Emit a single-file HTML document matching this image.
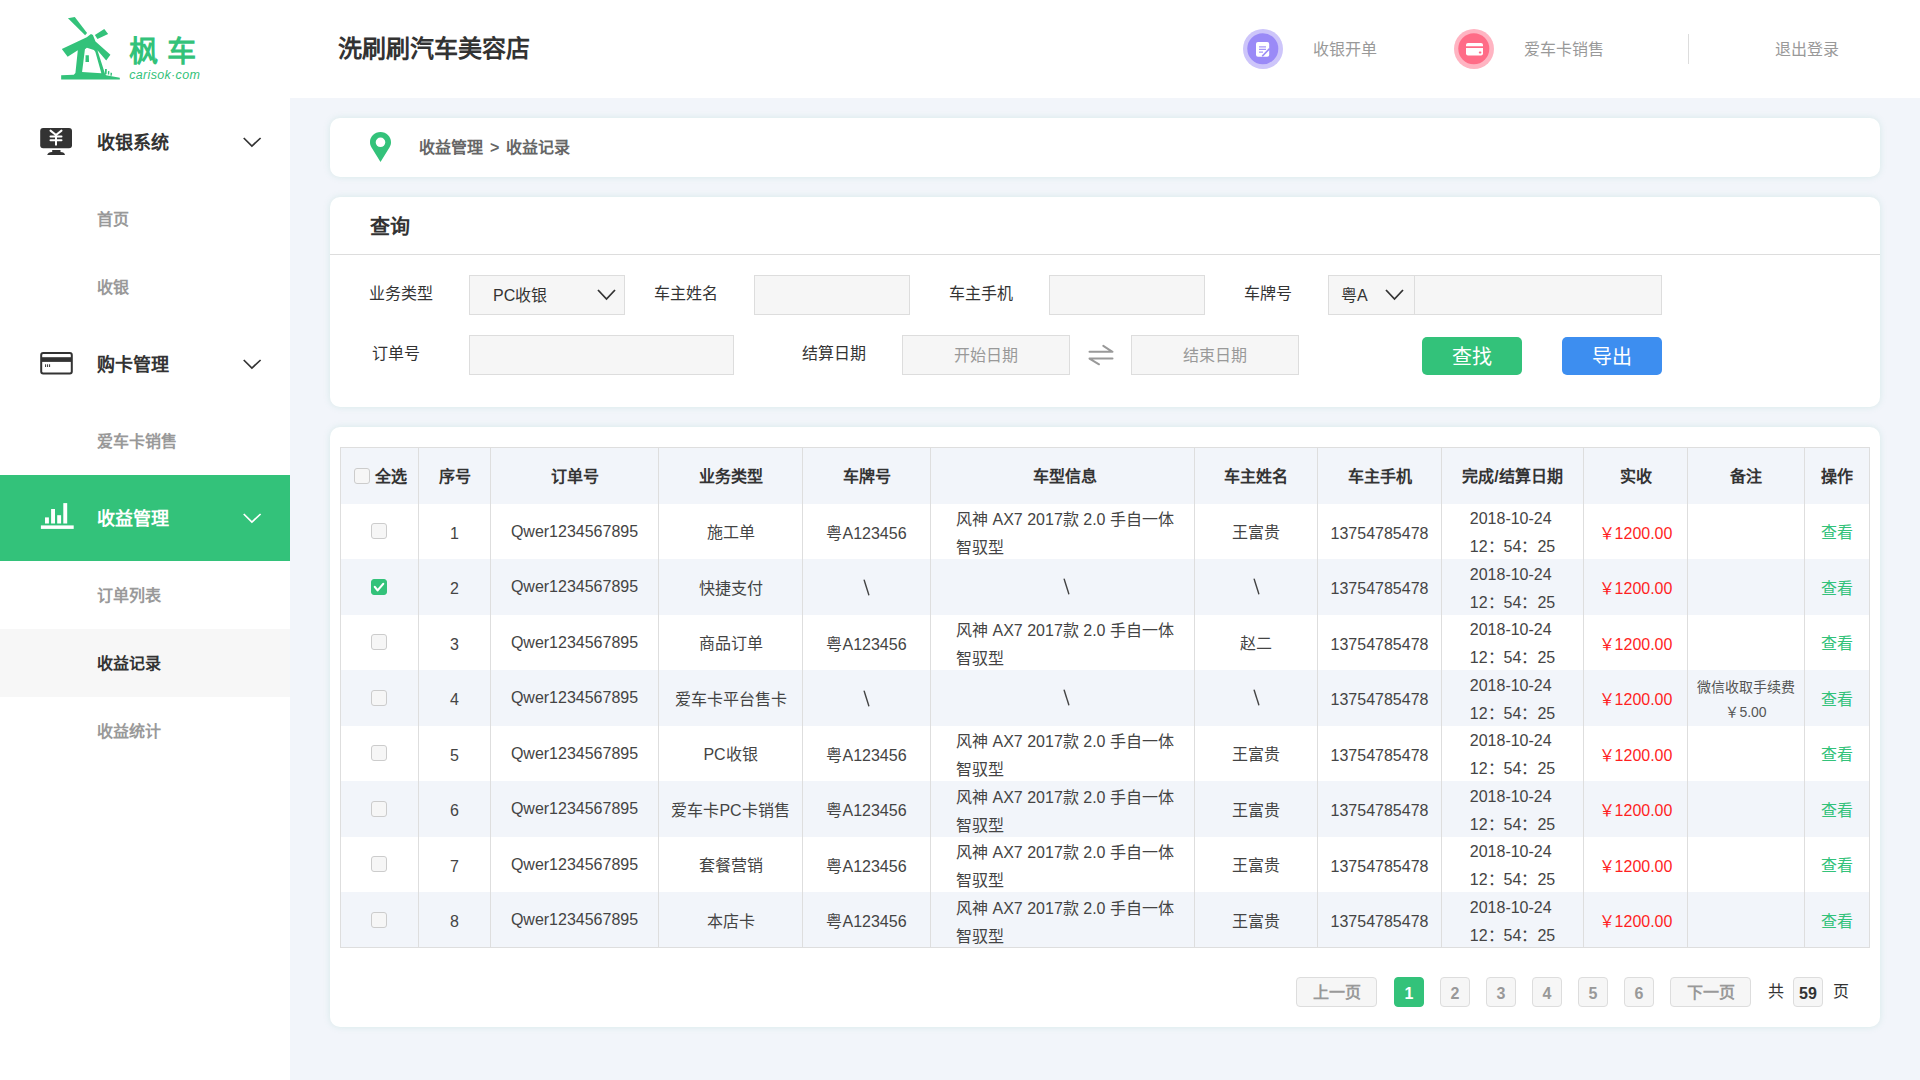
<!DOCTYPE html>
<html lang="zh-CN"><head><meta charset="utf-8">
<style>
*{margin:0;padding:0;box-sizing:border-box}
html,body{width:1920px;height:1080px;overflow:hidden;background:#f2f5fa;font-family:"Liberation Sans",sans-serif;color:#333}
.abs{position:absolute}
.t{position:absolute;white-space:nowrap;line-height:1}
#hdr{position:absolute;left:0;top:0;width:1920px;height:98px;background:#fff}
#side{position:absolute;left:0;top:98px;width:290px;height:982px;background:#fff}
.card{position:absolute;background:#fff;border-radius:10px;box-shadow:0 0 6px rgba(130,200,185,.25)}
.grp{position:absolute;left:0;width:290px;height:86px}
.grp .lbl{position:absolute;left:97px;top:34px;font-size:18px;font-weight:bold;color:#333;line-height:20px}
.chev{position:absolute;left:243px;top:37px}
.sub{position:absolute;left:0;width:290px;height:68px}
.sub .lbl{position:absolute;left:97px;top:25px;font-size:16px;color:#999;line-height:20px;font-weight:bold}
.inp{position:absolute;background:#f6f6f6;border:1px solid #ddd}
.flbl{position:absolute;font-size:16px;color:#333;line-height:20px;margin-top:1px}
.c{position:absolute;display:flex;align-items:center;justify-content:center;font-size:16px;color:#444;text-align:center;white-space:nowrap}
.hd{font-weight:bold;color:#333}
.car{text-align:left;line-height:28px}
.dt{text-align:left;line-height:28px}
.rm{font-size:14px;line-height:25px;color:#555}
.cb{display:inline-block;width:16px;height:16px;border:1px solid #ccc;border-radius:3px;background:#f6f6f6;vertical-align:middle}
.cb.on{background:#33c27a;border-color:#33c27a;position:relative}
.cb.on svg{position:absolute;left:-1px;top:-1px}
.pb{position:absolute;top:977px;height:30px;border:1px solid #ddd;border-radius:4px;background:#f6f6f6;font-size:16px;display:flex;align-items:center;justify-content:center}
</style></head><body>
<div id="hdr">
  <!-- logo -->
  <svg class="abs" style="left:55px;top:12px" width="70" height="70" viewBox="55 12 70 70">
    <g fill="#33c27a">
      <polygon points="67.96,18.16 74.77,17.06 87.08,33.06 85.14,35.33"/>
      <polygon points="94.86,35.01 104.26,28.98 108.15,34.04 97.45,38.90"/>
      <path fill-rule="evenodd" d="M61.81,48.94 86.76,37.28 90.97,33.91 92.92,35.01 95.51,41.49 110.42,54.78 106.20,60.61 97.45,50.24 104.91,73.57 106.20,75.19 119.81,77.79 119.81,79.41 61.16,79.41 61.16,75.19 73.80,74.87 75.42,72.93 77.81,50.24 67.64,56.72 Z M84.94,49.27 86.89,47.84 93.89,50.11 95.31,51.67 101.34,73.25 82.09,71.95 Z"/>
      <polygon points="85.59,55.30 88.83,55.30 89.03,61.91 85.46,61.91"/>
      <polygon points="105.04,69.04 106.85,69.04 106.53,74.22 104.91,74.22"/>
      <polygon points="108.02,70.98 109.44,71.31 109.12,74.55 107.82,74.55"/>
      <polygon points="110.61,72.60 112.04,72.93 111.71,75.84 110.42,75.84"/>
    </g>
  </svg>
  <svg class="abs" style="left:50px;top:10px" width="160" height="80" viewBox="0 0 1920 960">
    <text x="945" y="625" font-size="350" letter-spacing="110" fill="#33c27a" font-weight="bold" font-family="Liberation Sans">枫车</text>
    <text x="950" y="832" font-size="150" letter-spacing="4" fill="#33c27a" font-style="italic" font-family="Liberation Sans">carisok·com</text>
  </svg>
  <div class="t" style="left:338px;top:37px;font-size:24px;font-weight:bold;color:#333">洗刷刷汽车美容店</div>
  <!-- right -->
  <svg class="abs" style="left:1243px;top:29px" width="40" height="40" viewBox="1243 29 40 40">
    <circle cx="1263" cy="49" r="20" fill="#cdc5fa"/>
    <circle cx="1262.8" cy="48.8" r="15.5" fill="#9a8af7"/>
    <rect x="1256" y="42" width="13.2" height="14.7" rx="2" fill="#fff"/>
    <path d="M1259 46.8 H1266 M1259 49.4 H1266 M1259 52.1 H1263" stroke="#a899f7" stroke-width="1.3"/>
    <path d="M1262.2 56.2 L1269.6 48.6" stroke="#9a8af7" stroke-width="1.6"/>
  </svg>
  <div class="t" style="left:1313px;top:42px;font-size:16px;color:#999">收银开单</div>
  <svg class="abs" style="left:1454px;top:29px" width="40" height="40" viewBox="1454 29 40 40">
    <circle cx="1474" cy="49" r="20" fill="#ffb4c2"/>
    <circle cx="1473.8" cy="48.8" r="15.5" fill="#ff6c87"/>
    <path d="M1468 43 H1481 Q1483 43 1483 45 V46.3 H1466 V45 Q1466 43 1468 43 Z" fill="#fff"/>
    <path d="M1466 48.1 H1483 V53.4 Q1483 55.4 1481 55.4 H1468 Q1466 55.4 1466 53.4 Z" fill="#fff"/>
    <rect x="1478.8" y="51.6" width="2.6" height="1.8" rx=".9" fill="#ff6c87"/>
  </svg>
  <div class="t" style="left:1524px;top:42px;font-size:16px;color:#999">爱车卡销售</div>
  <div class="abs" style="left:1688px;top:34px;width:1px;height:30px;background:#ddd"></div>
  <div class="t" style="left:1775px;top:42px;font-size:16px;color:#999">退出登录</div>
</div>

<div id="side">
  <!-- group 1 -->
  <div class="grp" style="top:1px">
    <svg class="abs" style="left:40px;top:29px" width="33" height="27" viewBox="40 128 33 27">
      <rect x="40.2" y="128" width="31.8" height="20.2" rx="3" fill="#333"/>
      <path d="M50.5 130.6 L56 135 L61.5 130.6 M50.5 136.6 H61.5 M50.5 140.2 H61.5 M56 135 V144.8" stroke="#fff" stroke-width="2" fill="none" stroke-linecap="round"/>
      <rect x="52.2" y="150" width="8.3" height="3" fill="#333"/>
      <path d="M47.2 155 Q48 152 52 152 H60.5 Q64.5 152 65 155 Z" fill="#333"/>
    </svg>
    <div class="lbl">收银系统</div>
    <svg class="chev" width="19" height="12" viewBox="0 0 19 12"><path d="M0.75 2 L8.9 10.1 L17.6 2" stroke="#333" stroke-width="1.7" fill="none"/></svg>
  </div>
  <div class="sub" style="top:87px"><div class="lbl">首页</div></div>
  <div class="sub" style="top:155px"><div class="lbl">收银</div></div>
  <!-- group 2 -->
  <div class="grp" style="top:223px">
    <svg class="abs" style="left:40px;top:30px" width="34" height="25" viewBox="40 351 34 25">
      <rect x="41.2" y="353" width="30.6" height="20.6" rx="2" fill="none" stroke="#333" stroke-width="2"/>
      <rect x="41" y="357.2" width="31" height="4.7" fill="#333"/>
      <path d="M45.6 364.3 V367 M47.6 364.3 V367 M49.6 364.3 V367" stroke="#333" stroke-width="1"/>
    </svg>
    <div class="lbl">购卡管理</div>
    <svg class="chev" width="19" height="12" viewBox="0 0 19 12"><path d="M0.75 2 L8.9 10.1 L17.6 2" stroke="#333" stroke-width="1.7" fill="none"/></svg>
  </div>
  <div class="sub" style="top:309px"><div class="lbl">爱车卡销售</div></div>
  <!-- group 3 active -->
  <div class="grp" style="top:377px;background:#33c27a">
    <svg class="abs" style="left:40px;top:27px" width="35" height="28" viewBox="40 502 35 28">
      <rect x="40.9" y="525.4" width="32.8" height="3.5" fill="#fff"/>
      <rect x="45" y="517.4" width="3.9" height="6.1" fill="#fff"/>
      <rect x="51.1" y="509" width="3.9" height="14.5" fill="#fff"/>
      <rect x="57.2" y="515.2" width="3.9" height="8.3" fill="#fff"/>
      <rect x="63.3" y="503.1" width="3.9" height="20.4" fill="#fff"/>
    </svg>
    <div class="lbl" style="color:#fff">收益管理</div>
    <svg class="chev" width="19" height="12" viewBox="0 0 19 12"><path d="M0.75 2 L8.9 10.1 L17.6 2" stroke="#fff" stroke-width="1.7" fill="none"/></svg>
  </div>
  <div class="sub" style="top:463px"><div class="lbl">订单列表</div></div>
  <div class="sub" style="top:531px;background:#f7f7f7"><div class="lbl" style="color:#333">收益记录</div></div>
  <div class="sub" style="top:599px"><div class="lbl">收益统计</div></div>
</div>

<!-- breadcrumb -->
<div class="card" style="left:330px;top:118px;width:1550px;height:59px"></div>
<svg class="abs" style="left:369px;top:131px" width="23" height="32" viewBox="0 0 23 32">
  <path d="M11.5 1 C5.6 1 1 5.5 1 11.2 C1 13.2 1.6 14.6 2.4 16.2 L11.5 31 L20.6 16.2 C21.4 14.6 22 13.2 22 11.2 C22 5.5 17.4 1 11.5 1 Z M11.5 6.5 A4.8 4.8 0 1 1 11.5 16.1 A4.8 4.8 0 1 1 11.5 6.5 Z" fill="#33c27a" fill-rule="evenodd"/>
</svg>
<div class="t" style="left:419px;top:140px;font-size:16px;font-weight:bold;color:#666">收益管理<span style="display:inline-block;width:7px"></span>&gt;<span style="display:inline-block;width:7px"></span>收益记录</div>
<!-- query -->
<div class="card" style="left:330px;top:197px;width:1550px;height:210px"></div>
<div class="t" style="left:370px;top:217px;font-size:20px;font-weight:bold;color:#333">查询</div>
<div class="abs" style="left:330px;top:254px;width:1550px;height:1px;background:#ddd"></div>
<div class="flbl" style="left:369px;top:283px">业务类型</div>
<div class="inp" style="left:469px;top:275px;width:156px;height:40px"></div>
<div class="t" style="left:493px;top:288px;font-size:16px;color:#333">PC收银</div>
<svg class="abs" style="left:597px;top:289px" width="19" height="12" viewBox="0 0 19 12"><path d="M1 1 L9.5 10 L18 1" stroke="#333" stroke-width="1.8" fill="none"/></svg>
<div class="flbl" style="left:654px;top:283px">车主姓名</div>
<div class="inp" style="left:754px;top:275px;width:156px;height:40px"></div>
<div class="flbl" style="left:949px;top:283px">车主手机</div>
<div class="inp" style="left:1049px;top:275px;width:156px;height:40px"></div>
<div class="flbl" style="left:1244px;top:283px">车牌号</div>
<div class="inp" style="left:1328px;top:275px;width:334px;height:40px"></div>
<div class="abs" style="left:1414px;top:276px;width:1px;height:38px;background:#ddd"></div>
<div class="t" style="left:1341px;top:288px;font-size:16px;color:#333">粤A</div>
<svg class="abs" style="left:1385px;top:289px" width="19" height="12" viewBox="0 0 19 12"><path d="M1 1 L9.5 10 L18 1" stroke="#333" stroke-width="1.8" fill="none"/></svg>

<div class="flbl" style="left:372px;top:343px">订单号</div>
<div class="inp" style="left:469px;top:335px;width:265px;height:40px"></div>
<div class="flbl" style="left:802px;top:343px">结算日期</div>
<div class="inp" style="left:902px;top:335px;width:168px;height:40px"></div>
<div class="t" style="left:954px;top:348px;font-size:16px;color:#999">开始日期</div>
<svg class="abs" style="left:1087px;top:343px" width="28" height="24" viewBox="1087 343 28 24">
  <path d="M1089.5 351.8 H1112.5 L1103.3 345.8 M1112.5 358.6 H1089.5 L1099 364.3" stroke="#999" stroke-width="2" fill="none" stroke-linejoin="round" stroke-linecap="round"/>
</svg>
<div class="inp" style="left:1131px;top:335px;width:168px;height:40px"></div>
<div class="t" style="left:1183px;top:348px;font-size:16px;color:#999">结束日期</div>
<div class="abs" style="left:1422px;top:337px;width:100px;height:38px;border-radius:5px;background:#33c27a"></div>
<div class="t" style="left:1452px;top:347px;font-size:20px;color:#fff">查找</div>
<div class="abs" style="left:1562px;top:337px;width:100px;height:38px;border-radius:5px;background:#3d8ef0"></div>
<div class="t" style="left:1592px;top:347px;font-size:20px;color:#fff">导出</div>
<!-- tablecard -->
<div class="card" style="left:330px;top:427px;width:1550px;height:600px"></div>
<!-- table -->
<div class="abs" style="left:340px;top:447px;width:1530px;height:501px;background:#fff"></div>
<div class="abs" style="left:341px;top:448px;width:1528px;height:55.5px;background:#f2f5fa"></div>
<div class="abs" style="left:341px;top:559.0px;width:1528px;height:55.5px;background:#f2f5fa"></div>
<div class="abs" style="left:341px;top:670.0px;width:1528px;height:55.5px;background:#f2f5fa"></div>
<div class="abs" style="left:341px;top:781.0px;width:1528px;height:55.5px;background:#f2f5fa"></div>
<div class="abs" style="left:341px;top:892.0px;width:1528px;height:55.5px;background:#f2f5fa"></div>
<div class="abs" style="left:418px;top:448px;width:1px;height:499px;background:#dedede"></div>
<div class="abs" style="left:490px;top:448px;width:1px;height:499px;background:#dedede"></div>
<div class="abs" style="left:658px;top:448px;width:1px;height:499px;background:#dedede"></div>
<div class="abs" style="left:802px;top:448px;width:1px;height:499px;background:#dedede"></div>
<div class="abs" style="left:930px;top:448px;width:1px;height:499px;background:#dedede"></div>
<div class="abs" style="left:1194px;top:448px;width:1px;height:499px;background:#dedede"></div>
<div class="abs" style="left:1317px;top:448px;width:1px;height:499px;background:#dedede"></div>
<div class="abs" style="left:1441px;top:448px;width:1px;height:499px;background:#dedede"></div>
<div class="abs" style="left:1583px;top:448px;width:1px;height:499px;background:#dedede"></div>
<div class="abs" style="left:1687px;top:448px;width:1px;height:499px;background:#dedede"></div>
<div class="abs" style="left:1804px;top:448px;width:1px;height:499px;background:#dedede"></div>
<div class="abs" style="left:340px;top:447px;width:1530px;height:501px;border:1px solid #dedede"></div>
<div class="c hd" style="left:341px;top:448px;width:77px;height:55.5px;padding-bottom:2px;"><span class="cb" style="margin-right:6px;position:relative;left:1px;top:1px"></span>全选</div>
<div class="c hd" style="left:419px;top:448px;width:71px;height:55.5px;padding-bottom:2px;">序号</div>
<div class="c hd" style="left:491px;top:448px;width:167px;height:55.5px;padding-bottom:2px;">订单号</div>
<div class="c hd" style="left:659px;top:448px;width:143px;height:55.5px;padding-bottom:2px;">业务类型</div>
<div class="c hd" style="left:803px;top:448px;width:127px;height:55.5px;padding-bottom:2px;">车牌号</div>
<div class="c hd" style="left:931px;top:448px;width:263px;height:55.5px;padding-bottom:2px;padding-left:5.0px;">车型信息</div>
<div class="c hd" style="left:1195px;top:448px;width:122px;height:55.5px;padding-bottom:2px;">车主姓名</div>
<div class="c hd" style="left:1318px;top:448px;width:123px;height:55.5px;padding-bottom:2px;">车主手机</div>
<div class="c hd" style="left:1442px;top:448px;width:141px;height:55.5px;padding-bottom:2px;">完成/结算日期</div>
<div class="c hd" style="left:1584px;top:448px;width:103px;height:55.5px;padding-bottom:2px;">实收</div>
<div class="c hd" style="left:1688px;top:448px;width:116px;height:55.5px;padding-bottom:2px;">备注</div>
<div class="c hd" style="left:1805px;top:448px;width:64px;height:55.5px;padding-bottom:2px;">操作</div>
<div class="c" style="left:341px;top:503.5px;width:77px;height:55.5px;"><span style="margin-left:-2px;display:flex"><span class="cb"></span></span></div>
<div class="c" style="left:419px;top:503.5px;width:71px;height:55.5px;padding-top:5.0px;">1</div>
<div class="c" style="left:491px;top:503.5px;width:167px;height:55.5px;padding-top:1.0px;">Qwer1234567895</div>
<div class="c" style="left:659px;top:503.5px;width:143px;height:55.5px;">施工单</div>
<div class="c" style="left:803px;top:503.5px;width:127px;height:55.5px;padding-top:1.0px;">粤A123456</div>
<div class="c" style="left:931px;top:503.5px;width:263px;height:55.5px;padding-top:6px;padding-left:5.0px;"><div class="car">风神 AX7 2017款 2.0 手自一体<br>智驭型</div></div>
<div class="c" style="left:1195px;top:503.5px;width:122px;height:55.5px;">王富贵</div>
<div class="c" style="left:1318px;top:503.5px;width:123px;height:55.5px;padding-top:5.0px;">13754785478</div>
<div class="c" style="left:1442px;top:503.5px;width:141px;height:55.5px;padding-top:4px;"><div class="dt">2018-10-24<br>12：54：25</div></div>
<div class="c" style="left:1584px;top:503.5px;width:103px;height:55.5px;padding-top:1.0px;color:#ff1f1f">￥1200.00</div>
<div class="c" style="left:1805px;top:503.5px;width:64px;height:55.5px;color:#33c27a">查看</div>
<div class="c" style="left:341px;top:559.0px;width:77px;height:55.5px;"><span style="margin-left:-2px;display:flex"><span class="cb on"><svg width="16" height="16" viewBox="0 0 16 16"><path d="M3.8 7.9 L6.6 11.4 L12.2 4.9" stroke="#fff" stroke-width="2.2" fill="none" stroke-linecap="round" stroke-linejoin="round"/></svg></span></span></div>
<div class="c" style="left:419px;top:559.0px;width:71px;height:55.5px;padding-top:5.0px;">2</div>
<div class="c" style="left:491px;top:559.0px;width:167px;height:55.5px;padding-top:1.0px;">Qwer1234567895</div>
<div class="c" style="left:659px;top:559.0px;width:143px;height:55.5px;">快捷支付</div>
<div class="c" style="left:803px;top:559.0px;width:127px;height:55.5px;padding-top:1.0px;"><svg width="7" height="17" viewBox="0 0 7 17" style="display:block"><path d="M1.2 1.2 L5.8 15.8" stroke="#444" stroke-width="1.4" stroke-linecap="round"/></svg></div>
<div class="c" style="left:931px;top:559.0px;width:263px;height:55.5px;padding-left:7px"><svg width="7" height="17" viewBox="0 0 7 17" style="display:block"><path d="M1.2 1.2 L5.8 15.8" stroke="#444" stroke-width="1.4" stroke-linecap="round"/></svg></div>
<div class="c" style="left:1195px;top:559.0px;width:122px;height:55.5px;"><svg width="7" height="17" viewBox="0 0 7 17" style="display:block"><path d="M1.2 1.2 L5.8 15.8" stroke="#444" stroke-width="1.4" stroke-linecap="round"/></svg></div>
<div class="c" style="left:1318px;top:559.0px;width:123px;height:55.5px;padding-top:5.0px;">13754785478</div>
<div class="c" style="left:1442px;top:559.0px;width:141px;height:55.5px;padding-top:4px;"><div class="dt">2018-10-24<br>12：54：25</div></div>
<div class="c" style="left:1584px;top:559.0px;width:103px;height:55.5px;padding-top:1.0px;color:#ff1f1f">￥1200.00</div>
<div class="c" style="left:1805px;top:559.0px;width:64px;height:55.5px;color:#33c27a">查看</div>
<div class="c" style="left:341px;top:614.5px;width:77px;height:55.5px;"><span style="margin-left:-2px;display:flex"><span class="cb"></span></span></div>
<div class="c" style="left:419px;top:614.5px;width:71px;height:55.5px;padding-top:5.0px;">3</div>
<div class="c" style="left:491px;top:614.5px;width:167px;height:55.5px;padding-top:1.0px;">Qwer1234567895</div>
<div class="c" style="left:659px;top:614.5px;width:143px;height:55.5px;">商品订单</div>
<div class="c" style="left:803px;top:614.5px;width:127px;height:55.5px;padding-top:1.0px;">粤A123456</div>
<div class="c" style="left:931px;top:614.5px;width:263px;height:55.5px;padding-top:6px;padding-left:5.0px;"><div class="car">风神 AX7 2017款 2.0 手自一体<br>智驭型</div></div>
<div class="c" style="left:1195px;top:614.5px;width:122px;height:55.5px;">赵二</div>
<div class="c" style="left:1318px;top:614.5px;width:123px;height:55.5px;padding-top:5.0px;">13754785478</div>
<div class="c" style="left:1442px;top:614.5px;width:141px;height:55.5px;padding-top:4px;"><div class="dt">2018-10-24<br>12：54：25</div></div>
<div class="c" style="left:1584px;top:614.5px;width:103px;height:55.5px;padding-top:1.0px;color:#ff1f1f">￥1200.00</div>
<div class="c" style="left:1805px;top:614.5px;width:64px;height:55.5px;color:#33c27a">查看</div>
<div class="c" style="left:341px;top:670.0px;width:77px;height:55.5px;"><span style="margin-left:-2px;display:flex"><span class="cb"></span></span></div>
<div class="c" style="left:419px;top:670.0px;width:71px;height:55.5px;padding-top:5.0px;">4</div>
<div class="c" style="left:491px;top:670.0px;width:167px;height:55.5px;padding-top:1.0px;">Qwer1234567895</div>
<div class="c" style="left:659px;top:670.0px;width:143px;height:55.5px;">爱车卡平台售卡</div>
<div class="c" style="left:803px;top:670.0px;width:127px;height:55.5px;padding-top:1.0px;"><svg width="7" height="17" viewBox="0 0 7 17" style="display:block"><path d="M1.2 1.2 L5.8 15.8" stroke="#444" stroke-width="1.4" stroke-linecap="round"/></svg></div>
<div class="c" style="left:931px;top:670.0px;width:263px;height:55.5px;padding-left:7px"><svg width="7" height="17" viewBox="0 0 7 17" style="display:block"><path d="M1.2 1.2 L5.8 15.8" stroke="#444" stroke-width="1.4" stroke-linecap="round"/></svg></div>
<div class="c" style="left:1195px;top:670.0px;width:122px;height:55.5px;"><svg width="7" height="17" viewBox="0 0 7 17" style="display:block"><path d="M1.2 1.2 L5.8 15.8" stroke="#444" stroke-width="1.4" stroke-linecap="round"/></svg></div>
<div class="c" style="left:1318px;top:670.0px;width:123px;height:55.5px;padding-top:5.0px;">13754785478</div>
<div class="c" style="left:1442px;top:670.0px;width:141px;height:55.5px;padding-top:4px;"><div class="dt">2018-10-24<br>12：54：25</div></div>
<div class="c" style="left:1584px;top:670.0px;width:103px;height:55.5px;padding-top:1.0px;color:#ff1f1f">￥1200.00</div>
<div class="c" style="left:1688px;top:670.0px;width:116px;height:55.5px;padding-top:5.0px;"><div class="rm">微信收取手续费<br>￥5.00</div></div>
<div class="c" style="left:1805px;top:670.0px;width:64px;height:55.5px;color:#33c27a">查看</div>
<div class="c" style="left:341px;top:725.5px;width:77px;height:55.5px;"><span style="margin-left:-2px;display:flex"><span class="cb"></span></span></div>
<div class="c" style="left:419px;top:725.5px;width:71px;height:55.5px;padding-top:5.0px;">5</div>
<div class="c" style="left:491px;top:725.5px;width:167px;height:55.5px;padding-top:1.0px;">Qwer1234567895</div>
<div class="c" style="left:659px;top:725.5px;width:143px;height:55.5px;">PC收银</div>
<div class="c" style="left:803px;top:725.5px;width:127px;height:55.5px;padding-top:1.0px;">粤A123456</div>
<div class="c" style="left:931px;top:725.5px;width:263px;height:55.5px;padding-top:6px;padding-left:5.0px;"><div class="car">风神 AX7 2017款 2.0 手自一体<br>智驭型</div></div>
<div class="c" style="left:1195px;top:725.5px;width:122px;height:55.5px;">王富贵</div>
<div class="c" style="left:1318px;top:725.5px;width:123px;height:55.5px;padding-top:5.0px;">13754785478</div>
<div class="c" style="left:1442px;top:725.5px;width:141px;height:55.5px;padding-top:4px;"><div class="dt">2018-10-24<br>12：54：25</div></div>
<div class="c" style="left:1584px;top:725.5px;width:103px;height:55.5px;padding-top:1.0px;color:#ff1f1f">￥1200.00</div>
<div class="c" style="left:1805px;top:725.5px;width:64px;height:55.5px;color:#33c27a">查看</div>
<div class="c" style="left:341px;top:781.0px;width:77px;height:55.5px;"><span style="margin-left:-2px;display:flex"><span class="cb"></span></span></div>
<div class="c" style="left:419px;top:781.0px;width:71px;height:55.5px;padding-top:5.0px;">6</div>
<div class="c" style="left:491px;top:781.0px;width:167px;height:55.5px;padding-top:1.0px;">Qwer1234567895</div>
<div class="c" style="left:659px;top:781.0px;width:143px;height:55.5px;">爱车卡PC卡销售</div>
<div class="c" style="left:803px;top:781.0px;width:127px;height:55.5px;padding-top:1.0px;">粤A123456</div>
<div class="c" style="left:931px;top:781.0px;width:263px;height:55.5px;padding-top:6px;padding-left:5.0px;"><div class="car">风神 AX7 2017款 2.0 手自一体<br>智驭型</div></div>
<div class="c" style="left:1195px;top:781.0px;width:122px;height:55.5px;">王富贵</div>
<div class="c" style="left:1318px;top:781.0px;width:123px;height:55.5px;padding-top:5.0px;">13754785478</div>
<div class="c" style="left:1442px;top:781.0px;width:141px;height:55.5px;padding-top:4px;"><div class="dt">2018-10-24<br>12：54：25</div></div>
<div class="c" style="left:1584px;top:781.0px;width:103px;height:55.5px;padding-top:1.0px;color:#ff1f1f">￥1200.00</div>
<div class="c" style="left:1805px;top:781.0px;width:64px;height:55.5px;color:#33c27a">查看</div>
<div class="c" style="left:341px;top:836.5px;width:77px;height:55.5px;"><span style="margin-left:-2px;display:flex"><span class="cb"></span></span></div>
<div class="c" style="left:419px;top:836.5px;width:71px;height:55.5px;padding-top:5.0px;">7</div>
<div class="c" style="left:491px;top:836.5px;width:167px;height:55.5px;padding-top:1.0px;">Qwer1234567895</div>
<div class="c" style="left:659px;top:836.5px;width:143px;height:55.5px;">套餐营销</div>
<div class="c" style="left:803px;top:836.5px;width:127px;height:55.5px;padding-top:1.0px;">粤A123456</div>
<div class="c" style="left:931px;top:836.5px;width:263px;height:55.5px;padding-top:6px;padding-left:5.0px;"><div class="car">风神 AX7 2017款 2.0 手自一体<br>智驭型</div></div>
<div class="c" style="left:1195px;top:836.5px;width:122px;height:55.5px;">王富贵</div>
<div class="c" style="left:1318px;top:836.5px;width:123px;height:55.5px;padding-top:5.0px;">13754785478</div>
<div class="c" style="left:1442px;top:836.5px;width:141px;height:55.5px;padding-top:4px;"><div class="dt">2018-10-24<br>12：54：25</div></div>
<div class="c" style="left:1584px;top:836.5px;width:103px;height:55.5px;padding-top:1.0px;color:#ff1f1f">￥1200.00</div>
<div class="c" style="left:1805px;top:836.5px;width:64px;height:55.5px;color:#33c27a">查看</div>
<div class="c" style="left:341px;top:892.0px;width:77px;height:55.5px;"><span style="margin-left:-2px;display:flex"><span class="cb"></span></span></div>
<div class="c" style="left:419px;top:892.0px;width:71px;height:55.5px;padding-top:5.0px;">8</div>
<div class="c" style="left:491px;top:892.0px;width:167px;height:55.5px;padding-top:1.0px;">Qwer1234567895</div>
<div class="c" style="left:659px;top:892.0px;width:143px;height:55.5px;">本店卡</div>
<div class="c" style="left:803px;top:892.0px;width:127px;height:55.5px;padding-top:1.0px;">粤A123456</div>
<div class="c" style="left:931px;top:892.0px;width:263px;height:55.5px;padding-top:6px;padding-left:5.0px;"><div class="car">风神 AX7 2017款 2.0 手自一体<br>智驭型</div></div>
<div class="c" style="left:1195px;top:892.0px;width:122px;height:55.5px;">王富贵</div>
<div class="c" style="left:1318px;top:892.0px;width:123px;height:55.5px;padding-top:5.0px;">13754785478</div>
<div class="c" style="left:1442px;top:892.0px;width:141px;height:55.5px;padding-top:4px;"><div class="dt">2018-10-24<br>12：54：25</div></div>
<div class="c" style="left:1584px;top:892.0px;width:103px;height:55.5px;padding-top:1.0px;color:#ff1f1f">￥1200.00</div>
<div class="c" style="left:1805px;top:892.0px;width:64px;height:55.5px;color:#33c27a">查看</div>
<div class="pb" style="left:1296px;width:81px;color:#999;font-weight:bold;padding-bottom:3px">上一页</div>
<div class="pb" style="left:1394px;width:30px;background:#33c27a;border-color:#33c27a;color:#fff;font-weight:bold;padding-top:3px">1</div>
<div class="pb" style="left:1440px;width:30px;color:#999;font-weight:bold;padding-top:3px">2</div>
<div class="pb" style="left:1486px;width:30px;color:#999;font-weight:bold;padding-top:3px">3</div>
<div class="pb" style="left:1532px;width:30px;color:#999;font-weight:bold;padding-top:3px">4</div>
<div class="pb" style="left:1578px;width:30px;color:#999;font-weight:bold;padding-top:3px">5</div>
<div class="pb" style="left:1624px;width:30px;color:#999;font-weight:bold;padding-top:3px">6</div>
<div class="pb" style="left:1670px;width:81px;color:#999;font-weight:bold;padding-bottom:3px">下一页</div>
<div class="t" style="left:1768px;top:984px;font-size:16px;color:#333">共</div>
<div class="pb" style="left:1793px;width:30px;color:#333;font-weight:bold;padding-top:3px">59</div>
<div class="t" style="left:1833px;top:984px;font-size:16px;color:#333">页</div>
<!-- /table -->

</body></html>
